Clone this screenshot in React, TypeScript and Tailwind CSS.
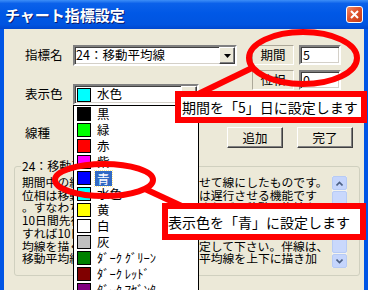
import React from "react";

type Swatch = { name: string; bg: string; selected?: boolean };

const swatches: Swatch[] = [
  { name: "黒", bg: "bg-[#000000]" },
  { name: "緑", bg: "bg-[#00ff00]" },
  { name: "赤", bg: "bg-[#ff0000]" },
  { name: "紫", bg: "bg-[#ff00ff]" },
  { name: "青", bg: "bg-[#0000ff]", selected: true },
  { name: "水色", bg: "bg-[#00ffff]" },
  { name: "黄", bg: "bg-[#ffff00]" },
  { name: "白", bg: "bg-[#ffffff]" },
  { name: "灰", bg: "bg-[#c0c0c0]" },
  { name: "ﾀﾞｰｸ ｸﾞﾘｰﾝ", bg: "bg-[#008000]" },
  { name: "ﾀﾞｰｸ ﾚｯﾄﾞ", bg: "bg-[#800000]" },
  { name: "ﾀﾞｰｸ ﾏｾﾞﾝﾀ", bg: "bg-[#800080]" },
];

const descLines: string[] = [
  "期間中の終値の平均を日々連続させて線にしたものです。",
  "位相は移動平均線を先行、あるいは遅行させる機能です",
  "。すなわち位相を正の数値に設定すれば、移動平均線を",
  "10日間先行させたい場合は、位相に10と入力して下さい",
  "すれば10日間遅行した線を描きます。なお、移動平均",
  "均線を描くには位相を負の値に設定して下さい。伴線は、",
  "移動平均線に一定幅を付けて移動平均線を上下に描き加",
];

const sunken =
  "border-2 border-t-[#808080] border-l-[#808080] border-b-white border-r-white shadow-[inset_1px_1px_0_#404040,inset_-1px_-1px_0_#d4d0c8]";
const raised =
  "border border-t-white border-l-white border-b-[#404040] border-r-[#404040] shadow-[inset_-1px_-1px_0_#808080] bg-[#ece9d8]";

const DropButton = () => (
  <div className={`w-[16px] h-full flex items-center justify-center shrink-0 ${raised}`}>
    <svg width="7" height="4" viewBox="0 0 7 4">
      <path d="M0 0h7L3.5 4z" fill="#000" />
    </svg>
  </div>
);

const Label = ({ text }: { text: string }) => (
  <span className="w-[48px] shrink-0 text-[12.5px] leading-none">{text}</span>
);

// open dropdown of the colour combo
const ColorList = () => (
  <div className="absolute -left-[2px] top-[19px] w-[126px] h-[200px] bg-white border border-black">
    {swatches.map((s, i) => (
      <div key={i + "swatch"} className="h-[16px] flex items-center pl-[3px]">
        <span className={`w-[14px] h-[14px] border border-black shrink-0 ${s.bg}`} />
        {s.selected ? (
          <span className="ml-[4px] px-[2px] h-[15px] leading-[15px] text-[12.5px] bg-[#316ac5] text-white outline-1 outline-dotted outline-[#ffe890]">
            {s.name}
          </span>
        ) : (
          <span className="ml-[6px] text-[12.5px] leading-none whitespace-nowrap">{s.name}</span>
        )}
      </div>
    ))}
  </div>
);

export default function App() {
  return (
    <div className="relative w-[368px] h-[290px] overflow-hidden bg-[#0055e5] font-['Noto_Sans_CJK_JP',sans-serif] text-black">
      {/* title bar */}
      <div className="h-[29px] flex items-center justify-between pl-[5px] pr-[5px] bg-[linear-gradient(180deg,#3d8ef7_0%,#0b61ea_12%,#0058e6_45%,#0054e0_85%,#0047cf_100%)]">
        <span className="text-white font-bold text-[15px] leading-none text-shadow-[1px_1px_0_#0a1b6b]">
          チャート指標設定
        </span>
        <div className="w-[17px] h-[17px] rounded-[3px] border border-white bg-[linear-gradient(135deg,#f08a67,#e0532c_45%,#c43b17)] flex items-center justify-center">
          <svg width="9" height="9" viewBox="0 0 9 9">
            <path d="M1 1l7 7M8 1L1 8" stroke="#fff" strokeWidth="2" />
          </svg>
        </div>
      </div>

      {/* dialog body */}
      <div className="mx-[4px] h-[261px] bg-[#ece9d8] text-[12px] leading-[12px]">
        <div className="flex pt-[16px]">
          <div className="ml-[21px] w-[212px] flex flex-col">
            <div className="flex items-center h-[21px]">
              <Label text="指標名" />
              <div className={`w-[164px] h-[21px] bg-white flex items-center ${sunken}`}>
                <span className="flex-1 pl-[1px] text-[12.5px] leading-none whitespace-nowrap">24：移動平均線</span>
                <DropButton />
              </div>
            </div>
            <div className="flex items-center h-[21px] mt-[18px]">
              <Label text="表示色" />
              <div className={`relative w-[126px] h-[21px] bg-white flex items-center ${sunken}`}>
                <span className="w-[14px] h-[14px] ml-[2px] border border-black bg-[#00ffff] shrink-0" />
                <span className="flex-1 ml-[6px] text-[12.5px] leading-none">水色</span>
                <DropButton />
                <ColorList />
              </div>
            </div>
            <div className="flex items-center h-[21px] mt-[18px]">
              <Label text="線種" />
              <div className={`w-[126px] h-[21px] bg-white flex items-center ${sunken}`}>
                <span className="flex-1" />
                <DropButton />
              </div>
            </div>
          </div>

          <div className="flex flex-col">
            <div className="ml-[15px] flex gap-[5px] h-[20px]">
              <div className="w-[42px] h-[20px] border border-t-[#aca899] border-l-[#aca899] border-b-white border-r-white flex items-center justify-center text-[12.5px]">
                期間
              </div>
              <div className={`w-[42px] h-[20px] bg-white flex items-center pl-[2px] text-[12.5px] ${sunken}`}>5</div>
            </div>
            <div className="ml-[15px] mt-[5px] flex gap-[5px] h-[20px]">
              <div className="w-[42px] h-[20px] border border-t-[#aca899] border-l-[#aca899] border-b-white border-r-white flex items-center justify-center text-[12.5px]">
                位相
              </div>
              <div className={`w-[42px] h-[20px] bg-white flex items-center pl-[2px] text-[12.5px] ${sunken}`}>0</div>
            </div>
            <div className="-ml-[10px] mt-[37px] flex gap-[14px]">
              <button className={`w-[56px] h-[21px] text-[12.5px] ${raised}`}>追加</button>
              <button className={`w-[56px] h-[21px] text-[12.5px] ${raised}`}>完了</button>
            </div>
          </div>
        </div>

        <fieldset className="mt-[12px] ml-[10px] w-[346px] border border-[#d0d0bf] rounded-[3px] px-[7px] pb-[7px]">
          <legend className="px-[1px] -ml-[1px] text-[12px] leading-[12px]">24：移動平均線</legend>
          <div className="mt-[4px] flex">
            <div className="w-[310px] overflow-hidden text-[11.8px] leading-[12.7px] whitespace-nowrap">
              {descLines.map((line, i) => (
                <div key={i + "line"}>{line}</div>
              ))}
            </div>
            <div className="w-[15px] h-[92px] flex flex-col bg-[#f4f3ee]">
              <div className="h-[14px] rounded-[2px] border border-[#b7cbf5] bg-[#c5d5fc] flex items-center justify-center">
                <svg width="7" height="5" viewBox="0 0 7 5">
                  <path d="M0.5 4.5L3.5 1.5L6.5 4.5" stroke="#4d6185" strokeWidth="1.6" fill="none" />
                </svg>
              </div>
              <div className="flex-1 my-[1px] rounded-[2px] border border-[#b7cbf5] bg-[#c9d8fc]" />
              <div className="h-[14px] rounded-[2px] border border-[#b7cbf5] bg-[#c5d5fc] flex items-center justify-center">
                <svg width="7" height="5" viewBox="0 0 7 5">
                  <path d="M0.5 0.5L3.5 3.5L6.5 0.5" stroke="#4d6185" strokeWidth="1.6" fill="none" />
                </svg>
              </div>
            </div>
          </div>
        </fieldset>
      </div>

      {/* annotations */}
      <svg className="absolute left-0 top-0 pointer-events-none" width="368" height="290" viewBox="0 0 368 290">
        <ellipse cx="303" cy="58" rx="54" ry="26" fill="none" stroke="#ff0000" strokeWidth="6" />
        <line x1="252" y1="68" x2="192" y2="97" stroke="#ff0000" strokeWidth="6" />
        <ellipse cx="104" cy="180" rx="49" ry="16" fill="none" stroke="#ff0000" strokeWidth="6" />
        <line x1="145" y1="189" x2="186" y2="208" stroke="#ff0000" strokeWidth="6" />
      </svg>
      <div className="absolute left-[175px] top-[91px] w-[192px] h-[32px] border-[6px] border-[#ff0000] bg-white flex items-center pl-[1px] text-[14px] leading-none whitespace-nowrap">
        期間を「5」日に設定します
      </div>
      <div className="absolute left-[162px] top-[203px] w-[204px] h-[37px] border-[6px] border-[#ff0000] bg-white flex items-center text-[14px] leading-none whitespace-nowrap">
        表示色を「青」に設定します
      </div>
    </div>
  );
}
